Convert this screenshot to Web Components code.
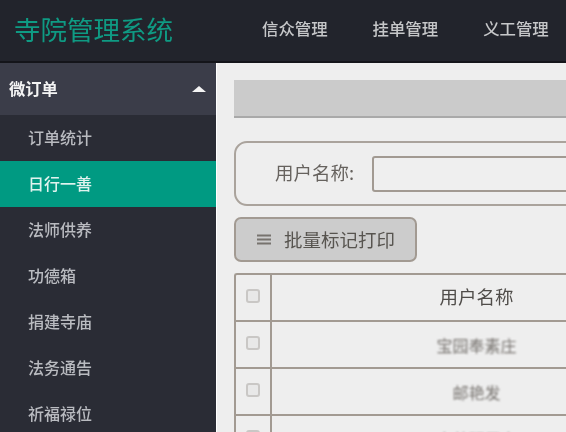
<!DOCTYPE html>
<html lang="zh">
<head>
<meta charset="utf-8">
<title>寺院管理系统</title>
<style>
  html, body { margin: 0; height: 100%; overflow: hidden; background: #22242c; }
  body { font-family: "Noto Sans CJK SC", "Liberation Sans", sans-serif; width: 566px; height: 432px; }
  #app { display: grid; grid-template-columns: 216px 350px; grid-template-rows: 63px 369px; width: 566px; height: 432px; filter: blur(0.5px); }
  top-bar { grid-column: 1 / 3; }
</style>
</head>
<body>
<div id="app">
  <top-bar title="寺院管理系统">
    <span>信众管理</span>
    <span>挂单管理</span>
    <span>义工管理</span>
  </top-bar>
  <side-menu heading="微订单">
    <side-item>订单统计</side-item>
    <side-item active>日行一善</side-item>
    <side-item>法师供养</side-item>
    <side-item>功德箱</side-item>
    <side-item>捐建寺庙</side-item>
    <side-item>法务通告</side-item>
    <side-item>祈福禄位</side-item>
  </side-menu>
  <main-panel>
    <search-box label="用户名称:"></search-box>
    <tool-button>批量标记打印</tool-button>
    <user-table heading="用户名称">
      <user-row>宝园奉素庄</user-row>
      <user-row>邮艳发</user-row>
      <user-row>李善明居士</user-row>
    </user-table>
  </main-panel>
</div>
<script>
class TopBar extends HTMLElement {
  connectedCallback() {
    const root = this.attachShadow({ mode: "open" });
    root.innerHTML = `
      <style>
        :host { display: flex; align-items: center; background: #22242c; color: #c6c7c9; overflow: hidden; border-bottom: 2px solid #14151a; box-sizing: border-box; }
        h1 { margin: 0 0 4px 14px; width: 248px; flex: none; font-size: 26.5px; line-height: 36px; font-weight: 400; color: #0f9a83; white-space: nowrap; }
        nav { display: flex; gap: 45px; font-size: 16.4px; font-weight: 500; margin-bottom: 5px; white-space: nowrap; }
      </style>
      <h1>${this.getAttribute("title")}</h1>
      <nav><slot></slot></nav>`;
  }
}
class SideMenu extends HTMLElement {
  connectedCallback() {
    const root = this.attachShadow({ mode: "open" });
    root.innerHTML = `
      <style>
        :host { display: block; background: #2a2c35; overflow: hidden; }
        .head { display: flex; align-items: center; justify-content: space-between; height: 52px; padding: 0 10px 0 9px; background: #3b3d49; color: #f4f4f4; font-size: 16.3px; font-weight: 700; }
        .head span { margin-bottom: 3px; }
        .arrow { width: 0; height: 0; border: 7px solid transparent; border-top: 0; border-bottom: 6px solid #f4f4f4; }
      </style>
      <div class="head"><span>${this.getAttribute("heading")}</span><i class="arrow"></i></div>
      <slot></slot>`;
  }
}
class SideItem extends HTMLElement {
  connectedCallback() {
    const root = this.attachShadow({ mode: "open" });
    root.innerHTML = `
      <style>
        :host { display: block; height: 46px; line-height: 45px; padding-left: 28px; font-size: 16px; font-weight: 500; color: #b9bbc0; }
        :host([active]) { background: #009a82; color: #dff3ee; }
      </style>
      <slot></slot>`;
  }
}
class MainPanel extends HTMLElement {
  connectedCallback() {
    const root = this.attachShadow({ mode: "open" });
    root.innerHTML = `
      <style>
        :host { display: block; background: #eeeeee; padding: 17px 0 0 17px; overflow: hidden; border-left: 1px solid #fff; box-sizing: border-box; width: 350px; }
        .strip { height: 36px; width: 400px; background: #cbcbcb; border-bottom: 2px solid #a9a9a9; margin-bottom: 23px; }
      </style>
      <div class="strip"></div>
      <slot></slot>`;
  }
}
class SearchBox extends HTMLElement {
  connectedCallback() {
    const root = this.attachShadow({ mode: "open" });
    root.innerHTML = `
      <style>
        :host { display: flex; align-items: center; box-sizing: border-box; width: 420px; height: 65px; margin-bottom: 11px; padding-left: 39px; border: 2px solid #aaa39c; border-radius: 13px; font-size: 18.5px; color: #66625e; }
        span { width: 97px; flex: none; white-space: nowrap; margin-bottom: 3px; }
        .input { box-sizing: border-box; flex: 1; height: 36px; background: #efefef; border: 2px solid #a29a92; border-radius: 3px; }
      </style>
      <span>${this.getAttribute("label")}</span>
      <div class="input"></div>`;
  }
}
class ToolButton extends HTMLElement {
  connectedCallback() {
    const root = this.attachShadow({ mode: "open" });
    root.innerHTML = `
      <style>
        :host { display: flex; align-items: center; box-sizing: border-box; width: 183px; height: 45px; margin-bottom: 11px; padding-left: 21px; background: #cccccc; border: 2px solid #a29a92; border-radius: 7px; font-size: 18.5px; color: #57544f; white-space: nowrap; }
        svg { margin-right: 13px; flex: none; }
        span { margin-bottom: 2px; }
      </style>
      <svg width="14" height="11" viewBox="0 0 14 11"><path d="M0 1.5h14M0 5.5h14M0 9.5h14" stroke="#77736e" stroke-width="2"/></svg>
      <span><slot></slot></span>`;
  }
}
class UserTable extends HTMLElement {
  connectedCallback() {
    const root = this.attachShadow({ mode: "open" });
    root.innerHTML = `
      <style>
        :host { display: block; width: 447px; box-sizing: border-box; border: 2px solid #a29a92; border-width: 2px 0 0 2px; border-top-left-radius: 3px; }
        .row { display: grid; grid-template-columns: 36px 1fr; height: 47px; border-bottom: 2px solid #a29a92; box-sizing: border-box; }
        .tick { display: flex; align-items: center; justify-content: center; padding-bottom: 3px; border-right: 2px solid #a29a92; }
        .tick i { width: 10px; height: 10px; border: 2px solid #c9c7c5; border-radius: 3px; background: #e8e8e8; }
        .name { display: flex; align-items: center; justify-content: center; font-size: 18.5px; color: #504d4a; }
        .name span { margin-bottom: 3px; }
      </style>
      <div class="row"><div class="tick"><i></i></div><div class="name"><span>${this.getAttribute("heading")}</span></div></div>
      <slot></slot>`;
  }
}
class UserRow extends HTMLElement {
  connectedCallback() {
    const root = this.attachShadow({ mode: "open" });
    root.innerHTML = `
      <style>
        :host { display: grid; grid-template-columns: 36px 1fr; height: 47px; border-bottom: 2px solid #a29a92; box-sizing: border-box; }
        .tick { display: flex; align-items: center; justify-content: center; padding-bottom: 3px; border-right: 2px solid #a29a92; }
        .tick i { width: 10px; height: 10px; border: 2px solid #c9c7c5; border-radius: 3px; background: #e8e8e8; }
        .name { display: flex; align-items: center; justify-content: center; font-size: 16px; color: #77736f; filter: blur(1.3px); }
      </style>
      <div class="tick"><i></i></div><div class="name"><slot></slot></div>`;
  }
}
customElements.define("top-bar", TopBar);
customElements.define("side-menu", SideMenu);
customElements.define("side-item", SideItem);
customElements.define("main-panel", MainPanel);
customElements.define("search-box", SearchBox);
customElements.define("tool-button", ToolButton);
customElements.define("user-table", UserTable);
customElements.define("user-row", UserRow);
</script>
</body>
</html>
